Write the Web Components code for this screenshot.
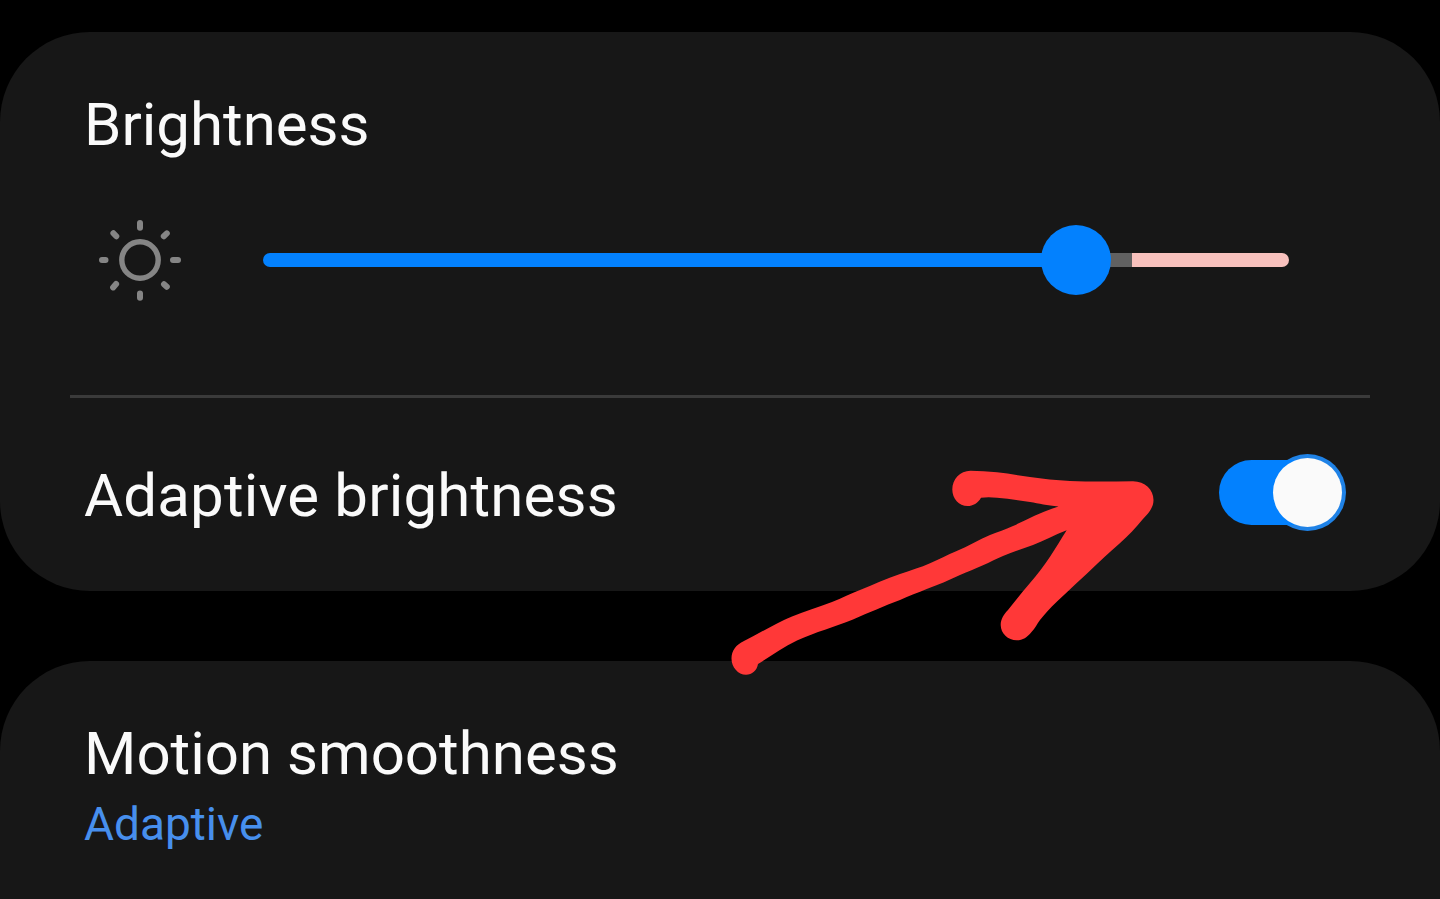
<!DOCTYPE html>
<html lang="en">
<head>
  <meta charset="utf-8" />
  <title>Display</title>
  <style>
    body {
      margin: 0;
      height: 899px;
      overflow: hidden;
      background: #000;
      color: #fafafa;
      font-family: Roboto, "Liberation Sans", sans-serif;
    }
  </style>
</head>
<body>
  <settings-page>
    <settings-card>
      <brightness-slider value="813" warn="869" max="1026">Brightness</brightness-slider>
      <setting-row>
        Adaptive brightness
        <toggle-switch slot="action"></toggle-switch>
      </setting-row>
    </settings-card>
    <settings-card class="last">
      <setting-link>
        Motion smoothness
        <span slot="value">Adaptive</span>
      </setting-link>
    </settings-card>
    <hand-arrow slot="overlay"></hand-arrow>
  </settings-page>

  <template id="page">
    <style>
      :host {
        display: flex;
        flex-direction: column;
        gap: 70px;
        box-sizing: border-box;
        height: 899px;
        padding-top: 32px;
        position: relative;
        overflow: hidden;
      }
    </style>
    <slot></slot>
    <slot name="overlay"></slot>
  </template>

  <template id="card">
    <style>
      :host {
        display: block;
        flex: none;
        box-sizing: border-box;
        height: 559px;
        border-radius: 90px;
        background: #171717;
      }
      :host(.last) {
        height: 420px;
      }
    </style>
    <slot></slot>
  </template>

  <template id="slider">
    <style>
      :host {
        display: block;
        box-sizing: border-box;
        height: 363px;
        padding: 58px 84px 0;
      }
      .title {
        font-size: 60px;
        line-height: 70px;
      }
      .row {
        display: flex;
        align-items: center;
        gap: 82px;
        margin-top: 59px;
        padding: 0 67px 0 15px;
      }
      svg {
        flex: none;
        width: 82px;
        height: 82px;
      }
      .track {
        flex: 1;
        display: flex;
        position: relative;
        height: 14px;
        border-radius: 7px;
      }
      .fill {
        background: #0381fe;
        border-radius: 7px 0 0 7px;
      }
      .rest {
        background: #616161;
      }
      .warn {
        flex: 1;
        background: #f8c1bd;
        border-radius: 0 7px 7px 0;
      }
      .thumb {
        position: absolute;
        top: -28px;
        width: 70px;
        height: 70px;
        margin-left: -35px;
        border-radius: 50%;
        background: #0381fe;
      }
    </style>
    <div class="title"><slot></slot></div>
    <div class="row">
      <svg viewBox="-41 -41 82 82" fill="none" stroke="#858585" stroke-width="6" stroke-linecap="round">
        <circle r="18.2" stroke-width="5.4" />
        <path d="M0-37V-32.2M0 33.5V37.8M-38 0H-34.5M33 0H38M-26.6-26.8L-23.7-23.7M26.8-26.6L23.8-23.8M-26.9 27.4L-23.9 24M26.8 26.8L24 24.2" />
      </svg>
      <div class="track">
        <div class="fill"></div>
        <div class="rest"></div>
        <div class="warn"></div>
        <div class="thumb"></div>
      </div>
    </div>
  </template>

  <template id="row">
    <style>
      :host {
        display: flex;
        justify-content: space-between;
        box-sizing: border-box;
        height: 196px;
        margin: 0 70px;
        padding: 56px 24px 0 14px;
        border-top: 3px solid #3a3a3a;
        font-size: 60px;
        line-height: 70px;
        letter-spacing: 0.16px;
      }
      .label {
        padding-top: 7px;
      }
    </style>
    <div class="label"><slot></slot></div>
    <slot name="action"></slot>
  </template>

  <template id="switch">
    <style>
      /* ring, bar and knob share one cell, the bar covers the inner half of the ring */
      :host {
        display: grid;
        align-items: center;
        justify-items: end;
        width: 127px;
        height: 77px;
      }
      div {
        grid-area: 1 / 1;
      }
      .ring {
        width: 77px;
        height: 77px;
        border-radius: 50%;
        background: #1f82e6;
      }
      .bar {
        justify-self: start;
        width: 120px;
        height: 65px;
        border-radius: 33px;
        background: #0381fe;
      }
      .knob {
        width: 69px;
        height: 69px;
        margin-right: 4px;
        border-radius: 50%;
        background: #fafafa;
      }
    </style>
    <div class="ring"></div>
    <div class="bar"></div>
    <div class="knob"></div>
  </template>

  <template id="link">
    <style>
      :host {
        display: block;
        padding: 58px 84px 0;
        font-size: 60px;
        line-height: 70px;
      }
      .value {
        margin-top: 8px;
        color: #478fed;
        font-size: 46px;
        line-height: 54px;
      }
    </style>
    <div><slot></slot></div>
    <div class="value"><slot name="value"></slot></div>
  </template>

  <template id="arrow">
    <style>
      :host {
        display: block;
        position: absolute;
        left: 720px;
        top: 460px;
        width: 450px;
        height: 230px;
      }
      svg {
        display: block;
      }
    </style>
    <svg width="450" height="230" viewBox="720 460 450 230">
      <path fill="#ff3838" d="M744 641 C760 633 776 623 792 616.500 C805 611 818 607.500 832 602 C842 598 851 593.500 860 590 C873 584.500 886 579 900 574 C910 570.500 921 567.500 930 563.300 C939 559.500 947 555 956.700 551 C968 546.500 979 539.500 990 535 C998 532 1005 529.500 1013 526 C1028 519 1042 511.500 1058.500 506.500 C1047 505.500 1039 503.500 1030 502 C1019 500.500 1008 498.500 997 497.700 C991 497 986 497 981 497.700 C978 503 973 506 967.500 506 C959 506 952.300 498.500 952.300 489.500 C952.300 479 960 470.700 970.500 470.700 C979 471 988 471.500 997 472.300 C1008 473.500 1019 475.500 1030 477 C1043 478.800 1056 480.300 1070 481 C1091 481.800 1112 481.500 1133 481.200 C1145 481.200 1153.500 489.500 1153.500 500 C1153.500 505 1151.500 509 1148 513.500 C1141 521 1134 530 1126.500 537 C1117 546 1107 554.500 1097 564 C1083 577.500 1069 590 1056.500 602 C1050 608 1045 614 1040 620 C1037 624 1035 628.500 1031.500 632 C1027 637.500 1023 640.300 1016.700 640.300 C1008 640.300 1000.700 633.500 1000.700 625 C1000.700 619 1004 614 1008 610 C1015 601 1022 592.500 1030 583 C1037 574.500 1044 566 1050 556.700 C1056 548 1061 539 1066.700 530.300 C1055 534.500 1044 541 1033 545 C1023 549 1013 551.500 1003 556 C996 559 990 562 983 565.300 C975 569 968 571.500 960 575 C949 580 938 585 926.700 589 C918 592.500 909 596 900 600 C884 606 869 612.500 853 619.500 C834 627 816 632 797 640.500 C783 647 771 656 758 664 C757 670.500 752 674.800 746 674.800 C738 674.800 731.500 667 731.500 658.500 C731.500 651 736 644.500 744 641Z" />
    </svg>
  </template>

  <script>
    // shadow root filled from the template with the given id
    class BaseElement extends HTMLElement {
      open(id) {
        if (this.shadowRoot) return;
        this.attachShadow({ mode: "open" });
        this.shadowRoot.append(document.getElementById(id).content.cloneNode(true));
      }
    }

    class SettingsPage extends BaseElement {
      connectedCallback() {
        this.open("page");
      }
    }

    class SettingsCard extends BaseElement {
      connectedCallback() {
        this.open("card");
      }
    }

    class BrightnessSlider extends BaseElement {
      connectedCallback() {
        this.open("slider");
        let max = Number(this.getAttribute("max"));
        let value = Number(this.getAttribute("value")) / max * 100;
        let warn = Number(this.getAttribute("warn")) / max * 100;
        let root = this.shadowRoot;
        root.querySelector(".fill").style.width = value + "%";
        root.querySelector(".rest").style.width = (warn - value) + "%";
        root.querySelector(".thumb").style.left = value + "%";
      }
    }

    class SettingRow extends BaseElement {
      connectedCallback() {
        this.open("row");
      }
    }

    class ToggleSwitch extends BaseElement {
      connectedCallback() {
        this.open("switch");
      }
    }

    class SettingLink extends BaseElement {
      connectedCallback() {
        this.open("link");
      }
    }

    class HandArrow extends BaseElement {
      connectedCallback() {
        this.open("arrow");
      }
    }

    customElements.define("settings-page", SettingsPage);
    customElements.define("settings-card", SettingsCard);
    customElements.define("brightness-slider", BrightnessSlider);
    customElements.define("setting-row", SettingRow);
    customElements.define("toggle-switch", ToggleSwitch);
    customElements.define("setting-link", SettingLink);
    customElements.define("hand-arrow", HandArrow);
  </script>
</body>
</html>
